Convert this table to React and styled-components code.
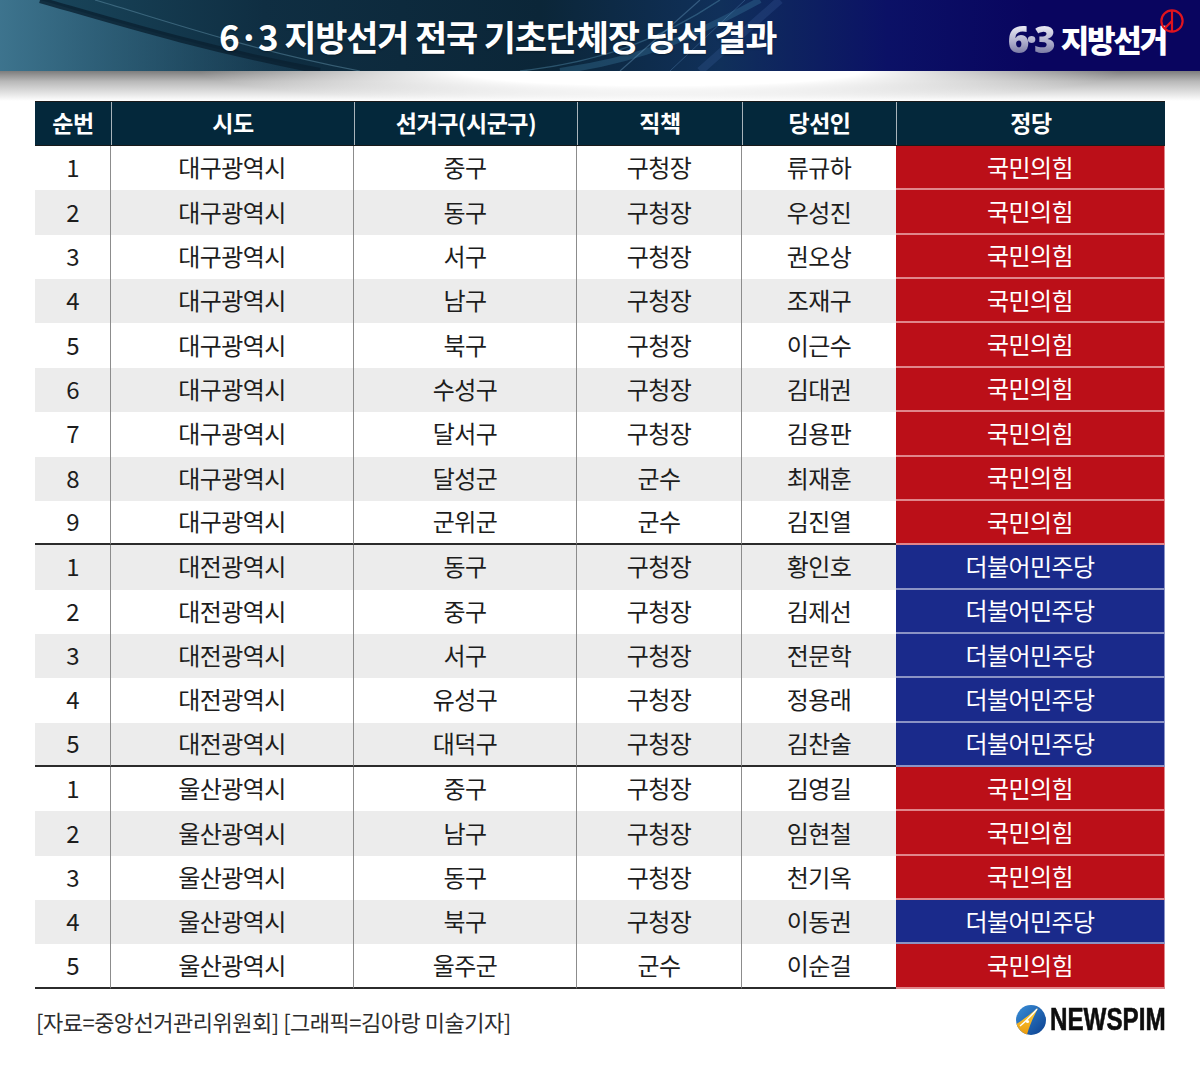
import React from "react";
import styled, { createGlobalStyle } from "styled-components";

const GlobalStyle = createGlobalStyle`
  html, body { margin: 0; padding: 0; background: #ffffff; }
  body { font-family: "Noto Sans CJK KR", "Noto Sans", sans-serif; }
  * { box-sizing: border-box; }
`;

const FONT = `"Noto Sans CJK KR", "Noto Sans", sans-serif`;
const COLS = "76px 243px 223px 165px 154px 269px";

const Page = styled.div`
  width: 1200px;
  height: 1067px;
  background: #fff;
  display: flex;
  flex-direction: column;
  overflow: hidden;
`;

const Banner = styled.header`
  position: relative;
  height: 71px;
  flex: none;
  background: linear-gradient(
    90deg,
    #1b4a60 0%,
    #0f2e42 22%,
    #0b2638 45%,
    #10305a 60%,
    #0b1166 74%,
    #09055f 86%,
    #09055f 100%
  );
  display: flex;
  align-items: center;
  overflow: hidden;
`;

const BannerArt = styled.svg`
  position: absolute;
  inset: 0;
  width: 100%;
  height: 100%;
  pointer-events: none;
`;

const Title = styled.h1`
  position: relative;
  margin: 0 0 0 219px;
  font-family: ${FONT};
  font-weight: 700;
  font-size: 35px;
  letter-spacing: -1.2px;
  color: #ffffff;
  line-height: 1;
  text-shadow: 0 1px 2px rgba(0, 0, 0, 0.35);
`;

const Brand = styled.div`
  position: relative;
  margin-left: auto;
  margin-right: 34px;
  display: flex;
  align-items: center;
  gap: 5px;
  margin-top: 6px;
`;

const BrandNum = styled.span`
  font-family: "Open Sans", "Noto Sans", sans-serif;
  font-weight: 800;
  font-size: 37px;
  letter-spacing: -3px;
  line-height: 1;
  background: linear-gradient(180deg, #f4f4fb 10%, #a5a5c6 65%, #6a6a96 100%);
  -webkit-background-clip: text;
  background-clip: text;
  color: transparent;
  padding-right: 3px;
`;

const BrandText = styled.span`
  font-family: ${FONT};
  font-weight: 900;
  font-size: 31px;
  letter-spacing: -2.2px;
  color: #fff;
  line-height: 1;
`;

const StampMark = styled.svg`
  position: absolute;
  right: -19px;
  top: -12px;
  width: 26px;
  height: 26px;
`;

const Shade = styled.div`
  height: 30px;
  flex: none;
  background:
    radial-gradient(ellipse 48% 140% at 55% 0%, rgba(255, 255, 255, 1) 35%, rgba(255, 255, 255, 0) 80%),
    linear-gradient(180deg, #7d7d7d 0%, #b9b9b9 35%, #ffffff 100%);
`;

const Table = styled.div`
  margin: 0 35px;
  display: flex;
  flex-direction: column;
`;

const HeadRow = styled.div`
  display: grid;
  grid-template-columns: ${COLS};
  height: 45px;
  background: #04283b;
  border-top: 1px solid #1a1a1a;
  border-bottom: 1px solid #1a1a1a;
`;

const HeadCell = styled.div`
  display: flex;
  align-items: center;
  justify-content: center;
  color: #ffffff;
  font-family: ${FONT};
  font-weight: 700;
  font-size: 23px;
  letter-spacing: -0.5px;
  padding-bottom: 3px;
  border-left: ${(p) => (p.$first ? "none" : "1px solid #a9b4bb")};
`;

const Row = styled.div`
  display: grid;
  grid-template-columns: ${COLS};
  height: 44.37px;
  background: ${(p) => (p.$shade ? "#ececec" : "#ffffff")};
`;

const Cell = styled.div`
  display: flex;
  align-items: center;
  justify-content: center;
  font-family: ${FONT};
  font-size: 24px;
  font-weight: 400;
  color: #1d1d1d;
  letter-spacing: -0.6px;
  padding-bottom: 3px;
  border-right: ${(p) => (p.$divider ? "1.5px solid #8c8c8c" : "none")};
  border-bottom: ${(p) => (p.$groupEnd ? "2px solid #2b2b2b" : "none")};
`;

const PartyCell = styled.div`
  display: flex;
  align-items: center;
  justify-content: center;
  font-family: ${FONT};
  font-size: 24px;
  font-weight: 400;
  letter-spacing: -0.6px;
  color: #ffffff;
  padding-bottom: 2px;
  background: ${(p) => (p.$party === "dem" ? "#1a2a8b" : "#bb0f18")};
  border-bottom: 2px solid
    ${(p) => (p.$party === "dem" ? "#8b93c4" : "#e0868b")};
  border-right: 1px solid
    ${(p) => (p.$party === "dem" ? "#8b93c4" : "#e0868b")};
`;

const Footer = styled.footer`
  margin: 16px 35px 0 36px;
  display: flex;
  align-items: center;
  justify-content: space-between;
`;

const Credit = styled.p`
  margin: 0;
  font-family: ${FONT};
  font-size: 22px;
  letter-spacing: -0.5px;
  color: #2d2d2d;
`;

const Logo = styled.div`
  display: flex;
  align-items: center;
  gap: 3px;
  margin-top: -2px;
`;

const LogoWord = styled.span`
  display: inline-block;
  font-family: "Liberation Sans", Arial, sans-serif;
  font-weight: 700;
  font-size: 31px;
  line-height: 1;
  color: #0d0d0d;
  transform: scaleX(0.78);
  transform-origin: left center;
  margin-right: -33px;
  -webkit-text-stroke: 0.6px #0d0d0d;
`;

const rows = [
  ["1", "대구광역시", "중구", "구청장", "류규하", "ppp"],
  ["2", "대구광역시", "동구", "구청장", "우성진", "ppp"],
  ["3", "대구광역시", "서구", "구청장", "권오상", "ppp"],
  ["4", "대구광역시", "남구", "구청장", "조재구", "ppp"],
  ["5", "대구광역시", "북구", "구청장", "이근수", "ppp"],
  ["6", "대구광역시", "수성구", "구청장", "김대권", "ppp"],
  ["7", "대구광역시", "달서구", "구청장", "김용판", "ppp"],
  ["8", "대구광역시", "달성군", "군수", "최재훈", "ppp"],
  ["9", "대구광역시", "군위군", "군수", "김진열", "ppp", true],
  ["1", "대전광역시", "동구", "구청장", "황인호", "dem"],
  ["2", "대전광역시", "중구", "구청장", "김제선", "dem"],
  ["3", "대전광역시", "서구", "구청장", "전문학", "dem"],
  ["4", "대전광역시", "유성구", "구청장", "정용래", "dem"],
  ["5", "대전광역시", "대덕구", "구청장", "김찬술", "dem", true],
  ["1", "울산광역시", "중구", "구청장", "김영길", "ppp"],
  ["2", "울산광역시", "남구", "구청장", "임현철", "ppp"],
  ["3", "울산광역시", "동구", "구청장", "천기옥", "ppp"],
  ["4", "울산광역시", "북구", "구청장", "이동권", "dem"],
  ["5", "울산광역시", "울주군", "군수", "이순걸", "ppp", true],
];

const partyName = { ppp: "국민의힘", dem: "더불어민주당" };
const headers = ["순번", "시도", "선거구(시군구)", "직책", "당선인", "정당"];

function NewspimIcon() {
  return (
    <svg width="32" height="32" viewBox="0 0 32 32">
      <defs>
        <linearGradient id="npBlue" x1="0" y1="0" x2="1" y2="1">
          <stop offset="0" stopColor="#3a8fd8" />
          <stop offset="1" stopColor="#0b3f8f" />
        </linearGradient>
        <linearGradient id="npGold" x1="0" y1="0" x2="0" y2="1">
          <stop offset="0" stopColor="#ffd23a" />
          <stop offset="1" stopColor="#e99a10" />
        </linearGradient>
      </defs>
      <circle cx="16" cy="16" r="15" fill="url(#npBlue)" />
      <path d="M1.5 20 C6 17 13 12 23 4 C19 12 15 20 12 30.5 C7 29 3 25 1.5 20 Z" fill="url(#npGold)" />
      <path d="M5 22 C10 18 16 12 22 5" stroke="#ffffff" strokeWidth="1.4" fill="none" />
      <circle cx="12.5" cy="17.5" r="1.6" fill="#ffffff" />
    </svg>
  );
}

export default function App() {
  return (
    <Page>
      <GlobalStyle />
      <Banner>
        <BannerArt viewBox="0 0 1200 71" preserveAspectRatio="none">
          <defs>
            <linearGradient id="swA" x1="0" y1="0" x2="1" y2="0">
              <stop offset="0" stopColor="#3f7690" stopOpacity="0.95" />
              <stop offset="1" stopColor="#23506a" stopOpacity="0.2" />
            </linearGradient>
          </defs>
          <path d="M0 0 L40 0 C110 20 200 48 320 71 L0 71 Z" fill="url(#swA)" />
          <path d="M40 0 C110 20 200 48 320 71" stroke="#0a2131" strokeWidth="6" fill="none" opacity="0.8" />
          <path d="M95 0 C170 22 250 50 360 71" stroke="#5d8ea5" strokeWidth="1.2" fill="none" opacity="0.5" />
          <path d="M520 71 C600 62 660 40 720 0" stroke="#4f8aa8" strokeWidth="1.5" fill="none" opacity="0.45" />
          <path d="M560 71 C640 60 690 38 760 0" stroke="#3d7aa0" strokeWidth="6" fill="none" opacity="0.35" />
          <path d="M620 71 L700 0" stroke="#6c9ec0" strokeWidth="1.2" fill="none" opacity="0.4" />
          <path d="M670 71 L745 0" stroke="#5f8fc0" strokeWidth="1" fill="none" opacity="0.35" />
          <path d="M700 71 L780 0" stroke="#4c74b4" strokeWidth="8" fill="none" opacity="0.2" />
        </BannerArt>
        <Title>6·3 지방선거 전국 기초단체장 당선 결과</Title>
        <Brand>
          <BrandNum>6·3</BrandNum>
          <BrandText>지방선거</BrandText>
          <StampMark viewBox="0 0 24 24">
            <circle cx="12" cy="12" r="9.8" fill="none" stroke="#e0141e" strokeWidth="2" />
            <path d="M12 2.2 V21.8" stroke="#e0141e" strokeWidth="2" />
            <path d="M12 12 L5.2 18.8" stroke="#e0141e" strokeWidth="2" />
          </StampMark>
        </Brand>
      </Banner>
      <Shade />
      <Table>
        <HeadRow>
          {headers.map((h, i) => (
            <HeadCell key={h} $first={i === 0}>
              {h}
            </HeadCell>
          ))}
        </HeadRow>
        {rows.map((r, i) => {
          const end = !!r[6];
          return (
            <Row key={i} $shade={i % 2 === 1}>
              <Cell $divider $groupEnd={end}>{r[0]}</Cell>
              <Cell $divider $groupEnd={end}>{r[1]}</Cell>
              <Cell $divider $groupEnd={end}>{r[2]}</Cell>
              <Cell $divider $groupEnd={end}>{r[3]}</Cell>
              <Cell $groupEnd={end}>{r[4]}</Cell>
              <PartyCell $party={r[5]}>{partyName[r[5]]}</PartyCell>
            </Row>
          );
        })}
      </Table>
      <Footer>
        <Credit>[자료=중앙선거관리위원회] [그래픽=김아랑 미술기자]</Credit>
        <Logo>
          <NewspimIcon />
          <LogoWord>NEWSPIM</LogoWord>
        </Logo>
      </Footer>
    </Page>
  );
}
